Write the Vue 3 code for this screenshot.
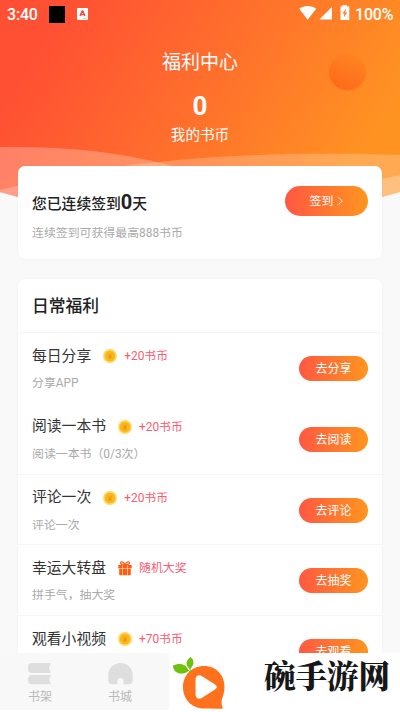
<script setup>
const tasks = [
  { title: '每日分享', reward: '+20书币', icon: 'coin', desc: '分享APP', action: '去分享' },
  { title: '阅读一本书', reward: '+20书币', icon: 'coin', desc: '阅读一本书（0/3次）', action: '去阅读', line: true },
  { title: '评论一次', reward: '+20书币', icon: 'coin', desc: '评论一次', action: '去评论', line: true },
  { title: '幸运大转盘', reward: '随机大奖', icon: 'gift', desc: '拼手气，抽大奖', action: '去抽奖', line: true },
  { title: '观看小视频', reward: '+70书币', icon: 'coin', action: '去观看' },
]
</script>

<template>
  <div class="screen">
    <svg class="backdrop" viewBox="0 0 400 210" width="400" height="210">
      <defs>
        <linearGradient id="sky" gradientUnits="userSpaceOnUse" x1="55" y1="20" x2="345" y2="190">
          <stop offset="0" stop-color="#ff5033" />
          <stop offset="0.5" stop-color="#ff702c" />
          <stop offset="1" stop-color="#ff9322" />
        </linearGradient>
        <linearGradient id="ball" x1="0.8" y1="0" x2="0.3" y2="1">
          <stop offset="0" stop-color="#ff8622" />
          <stop offset="1" stop-color="#ff691b" />
        </linearGradient>
      </defs>
      <path d="M0 0H400V192L382 197Q200 235 18 197L0 192Z" fill="url(#sky)" />
      <circle cx="347.500" cy="72" r="18.500" fill="url(#ball)" />
      <path d="M0 147C60 146 115 151 165 164C250 190 340 190 400 175V192L382 197Q200 235 18 197L0 192Z" fill="#fff" opacity=".26" />
      <path d="M0 190C100 166 210 149 400 155V192L382 197Q200 235 18 197L0 192Z" fill="#fff" opacity=".22" />
    </svg>

    <div class="status">
      <span class="time">3:40</span>
      <i class="block"></i>
      <svg class="ime" viewBox="0 0 11 12" width="11" height="12">
        <rect width="11" height="12" rx="1" fill="#fff" />
        <path d="M3 8L5.200 3H5.800L8 8M3.800 6.500H7.200" fill="none" stroke="#f0483a" stroke-width="1.400" />
        <path d="M6 10.300H10" stroke="#f5a090" stroke-width=".7" />
      </svg>
      <svg class="signals" viewBox="0 0 52 16" width="52" height="16">
        <path d="M.3 3.800C5 .1 12.500 .1 17.200 3.800L8.700 14.800Z" fill="#fff" />
        <path d="M33 2V14.500H20.300Z" fill="#fff" />
        <path d="M41.500 1.500H43.500V0H48V1.500H50.300V15H41.500Z" fill="#fff" />
        <path d="M47 3.500L43.500 8.600H45.400L44.800 12.600L48.300 7.400H46.300Z" fill="#ff7d2a" />
      </svg>
      <span class="battery">100%</span>
    </div>

    <header class="hero">
      <h1>福利中心</h1>
      <strong>0</strong>
      <p>我的书币</p>
    </header>

    <main>
      <section class="card signin">
        <div>
          <h2>您已连续签到<b>0</b>天</h2>
          <p>连续签到可获得最高888书币</p>
        </div>
        <button class="pill big">
          签到
          <svg viewBox="0 0 6 10" width="6" height="10"><path d="M.7 .7L5.200 5L.7 9.300" fill="none" stroke="#fff" stroke-width=".9" /></svg>
        </button>
      </section>

      <section class="card daily">
        <h2>日常福利</h2>
        <div v-for="task in tasks" :key="task.title" class="task" :class="{ line: task.line }">
          <div>
            <div class="heading">
              <h3>{{ task.title }}</h3>
              <svg v-if="task.icon === 'coin'" viewBox="0 0 14 14" width="14" height="14">
                <circle cx="7" cy="7" r="6.900" fill="#ffd65c" />
                <circle cx="7" cy="7" r="5.200" fill="#fbb51d" />
                <path d="M5.300 4.700L7 7L8.700 4.700M5.400 7.200H8.600M5.400 8.700H8.600M7 7V10" fill="none" stroke="#dd8d0c" stroke-width=".65" />
              </svg>
              <svg v-else viewBox="0 0 14 15" width="14" height="15">
                <path d="M7 3.800C5.500 .2 2.500 .1 2.500 2.100C2.500 3.400 4.500 3.800 7 3.800ZM7 3.800C8.500 .2 11.500 .1 11.500 2.100C11.500 3.400 9.500 3.800 7 3.800Z" fill="none" stroke="#f9622a" stroke-width="1.300" />
                <path d="M.3 4.100H4.300V7.300H.3ZM4.800 4.100H9.200V7.300H4.800ZM9.700 4.100H13.700V7.300H9.700ZM1.200 7.800H4.300V14.300H2.200Q1.200 14.300 1.200 13.300ZM4.800 7.800H9.200V14.300H4.800ZM9.700 7.800H12.800V13.300Q12.800 14.300 11.800 14.300H9.700Z" fill="#ff5c10" />
              </svg>
              <span>{{ task.reward }}</span>
            </div>
            <p v-if="task.desc">{{ task.desc }}</p>
          </div>
          <button class="pill">{{ task.action }}</button>
        </div>
      </section>
    </main>

    <footer>
      <nav>
        <a>
          <svg viewBox="0 0 24 22" width="24" height="22">
            <path d="M4 0H23L21 5L23.200 10H4Q0 10 0 6V4Q0 0 4 0ZM4 12H23.200L21 16.500L23 21.300H4Q0 21.300 0 17.500V16Q0 12 4 12Z" fill="#dedede" />
          </svg>
          <span>书架</span>
        </a>
        <a>
          <svg viewBox="0 0 25 22" width="25" height="22">
            <path d="M.3 12C.3 5 5.500 0 12.500 0S24.700 5 24.700 12V17Q24.700 21.300 20.500 21.300H15.600V18Q15.600 15 12.500 15T9.400 18V21.300H4.500Q.3 21.300 .3 17Z" fill="#dedede" />
          </svg>
          <span>书城</span>
        </a>
      </nav>
      <div class="brand">
        <svg viewBox="0 0 55 54" width="55" height="54">
          <path d="M31 9C42.500 9 51.500 17.500 51.500 29.500C51.500 35 50 39.500 48.800 42.500C48.200 46 48.600 48.700 50.200 51.500C43 52 37.500 51.500 31 51.500C18.500 51.500 10 42 10 30C10 18 19 9 31 9Z" fill="#ff711d" />
          <path d="M15.500 14C14 7.500 7 5 0 8.500C0 16 8.500 19.300 15.500 14Z" fill="#6fc20b" />
          <path d="M17 12C12 8 12.500 4 17.500 0C21.500 3 21.500 8 17 12Z" fill="#6fc20b" />
          <path d="M15 13L18 16M17 11L17.500 16" stroke="#6fc20b" />
          <path d="M22.500 23C22.500 18.500 26 17 29.500 19.500L42 27.500Q45.500 30 42 32.500L29.500 40.500C26 43 22.500 41.500 22.500 37Z" fill="#fff" />
        </svg>
        <strong>碗手游网</strong>
      </div>
    </footer>
  </div>
</template>

<style>
body { margin: 0; overflow: hidden; }
</style>

<style scoped>
* { box-sizing: border-box; }
h1, h2, h3, p { margin: 0; font-weight: 400; }
svg { display: block; flex: none; }
.screen {
  position: relative;
  width: 400px;
  height: 712px;
  overflow: hidden;
  display: flex;
  flex-direction: column;
  background: #f9f9f9;
  font-family: Roboto, "Noto Sans CJK SC", sans-serif;
  color: #333;
}
.backdrop { position: absolute; left: 0; top: 0; }
.status {
  position: relative;
  height: 28px;
  padding: 0 7px;
  display: flex;
  align-items: center;
  color: #fff;
  flex: none;
}
.time { width: 42px; font-weight: 500; font-size: 16px; letter-spacing: -.2px; }
.block { width: 16px; height: 17px; background: #000; }
.ime { margin-left: 12px; }
.signals { margin-left: auto; margin-top: -2px; }
.battery { width: 38px; margin-left: 4px; font-size: 16px; font-weight: 500; letter-spacing: -.2px; white-space: nowrap; }
.hero {
  position: relative;
  height: 138px;
  flex: none;
  padding-top: 20px;
  text-align: center;
  color: #fff;
}
.hero h1 { font-size: 19px; line-height: 30px; }
.hero strong { display: block; font-size: 26px; font-weight: 700; line-height: 30px; margin-top: 13px; }
.hero p { font-size: 14.600px; line-height: 22px; margin-top: 3px; }
main { position: relative; padding: 0 18px; flex: none; height: 487px; overflow: hidden; }
.card { background: #fff; border-radius: 7px; box-shadow: 0 0 3px rgba(0, 0, 0, .05); }
.signin { height: 93px; padding: 20px 14px 0; display: flex; justify-content: space-between; }
.signin h2 { font-size: 14.800px; line-height: 32px; font-weight: 500; color: #222; white-space: nowrap; }
.signin h2 b { font-size: 20px; font-weight: 700; }
.signin p { margin-top: 4px; font-size: 11.900px; line-height: 18px; color: #aaa; }
.pill {
  width: 69px;
  height: 25px;
  padding: 0;
  border: 0;
  border-radius: 15px;
  background: linear-gradient(90deg, #ff5842, #ff951f);
  color: #fff;
  font: 12px/25px Roboto, "Noto Sans CJK SC", sans-serif;
}
.pill.big { width: 83px; height: 30px; display: flex; align-items: center; justify-content: center; gap: 4px; font-size: 11.900px; }
.daily { margin-top: 20px; padding: 0; }
.daily h2 { height: 54px; padding-left: 14px; font-size: 16.800px; line-height: 54px; font-weight: 500; color: #222; border-bottom: 1px solid #f4f4f4; }
.task { height: 70.800px; padding: 12px 14px 0; display: flex; justify-content: space-between; }
.task.line { border-bottom: 1px solid #f6f6f6; }
.task .pill { margin-top: 11px; padding-top: 1px; }
.heading { display: flex; align-items: center; height: 22px; }
.heading h3 { font-size: 14.800px; line-height: 23px; }
.heading svg { margin: 0 7px 0 12px; }
.heading span { font-size: 11.900px; line-height: 18px; color: #f95c70; }
.task p { margin-top: 7px; font-size: 11.900px; line-height: 18px; color: #aaa; }
footer { position: relative; height: 59px; flex: none; display: flex; background: #fff; }
nav { width: 169px; height: 57px; background: #f8f8f8; display: flex; }
nav a { width: 80px; padding-top: 10px; display: flex; flex-direction: column; align-items: center; font-size: 12px; line-height: 18px; color: #b8b8b8; }
nav span { margin-top: 3px; }
.brand { flex: 1; height: 59px; background: #fff; display: flex; padding: 4px 0 0 4px; }
.brand strong {
  margin-left: 36px;
  font: 900 31.500px/36px "Noto Serif CJK SC", "Noto Sans CJK SC", serif;
  color: #171717;
  white-space: nowrap;
}
</style>
